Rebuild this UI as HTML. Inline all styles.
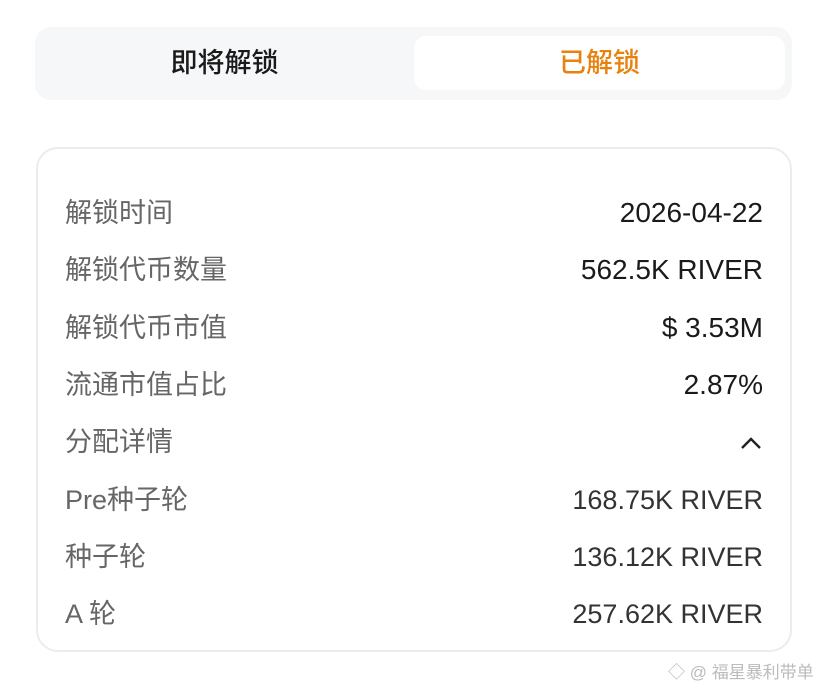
<!DOCTYPE html>
<html><head><meta charset="utf-8"><style>
*{margin:0;padding:0;box-sizing:border-box}
body{width:828px;height:690px;background:#fff;position:relative;overflow:hidden;font-family:"Liberation Sans","Noto Sans CJK SC",sans-serif}
.tabs{position:absolute;left:35px;top:27px;width:757px;height:73px;background:#f5f7f8;border-radius:16px}
.t{position:absolute;top:9px;height:54px;line-height:54px;text-align:center;font-size:27px;font-weight:500}
.t1{left:0;width:379px;color:#1a1a1a}
.t2{left:379px;width:371px;background:#fff;border-radius:12px;color:#e8820e}
.card{position:absolute;left:36px;top:147px;width:756px;height:505px;border:2px solid #ececec;border-radius:22px}
.r{position:absolute;left:65px;width:698px;height:40px;line-height:40px}
.l{position:absolute;left:0;color:#666;font-size:27px}
.v{position:absolute;right:0;color:#1a1a1a;font-size:28px;font-weight:500}
.v.n{font-weight:400;color:#333;font-size:27px}
.wm{position:absolute;left:668px;top:658px;font-size:17px;color:#bbb;white-space:nowrap}
</style></head><body>
<div class="tabs"><div class="t t1">即将解锁</div><div class="t t2">已解锁</div></div>
<div class="card"></div>
<div class="r" style="top:193px"><span class="l">解锁时间</span><span class="v">2026-04-22</span></div>
<div class="r" style="top:250px"><span class="l">解锁代币数量</span><span class="v">562.5K RIVER</span></div>
<div class="r" style="top:308px"><span class="l">解锁代币市值</span><span class="v">$ 3.53M</span></div>
<div class="r" style="top:365px"><span class="l">流通市值占比</span><span class="v">2.87%</span></div>
<div class="r" style="top:422px"><span class="l">分配详情</span><span class="v"><svg width="24" height="16" viewBox="0 0 24 16" style="margin-top:12px"><path d="M3 13 L12 4 L21 13" fill="none" stroke="#222" stroke-width="2.4"/></svg></span></div>
<div class="r" style="top:480px"><span class="l">Pre种子轮</span><span class="v n">168.75K RIVER</span></div>
<div class="r" style="top:537px"><span class="l">种子轮</span><span class="v n">136.12K RIVER</span></div>
<div class="r" style="top:594px"><span class="l">A 轮</span><span class="v n">257.62K RIVER</span></div>
<div class="wm">◇ @ 福星暴利带单</div>
</body></html>
